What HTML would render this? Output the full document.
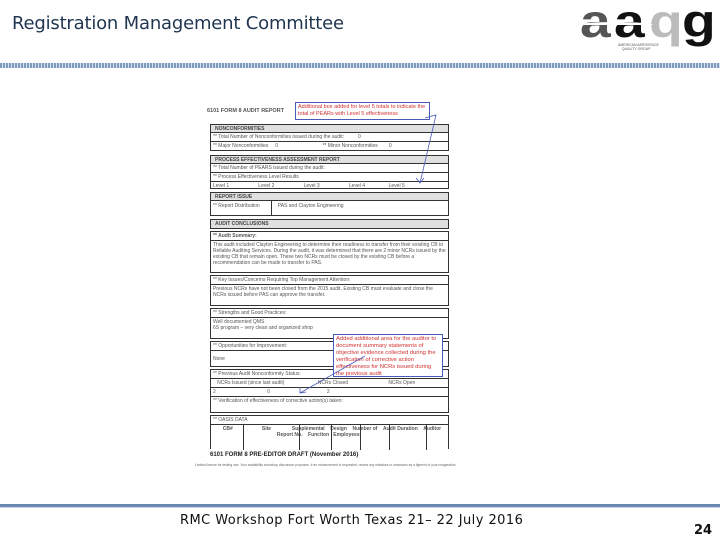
<!DOCTYPE html>
<html><head><meta charset="utf-8"><style>
*{margin:0;padding:0;box-sizing:border-box}
body{width:720px;height:540px;background:#fff;position:relative;overflow:hidden;font-family:"Liberation Sans",sans-serif}
.a{position:absolute}
.t{font-size:5px;color:#555;white-space:nowrap;line-height:6px}
.box{position:absolute;left:210px;width:239px;border:1px solid #333}
.hd{background:#e0e0e0;border-bottom:1px solid #333;height:8px;font-size:5px;font-weight:bold;padding-left:4px;line-height:8px;color:#444}
.logo{position:absolute;font-weight:bold;font-size:46px;line-height:46px;transform:scaleX(1.2);transform-origin:left top}
</style></head><body>
<div class="a" style="left:12px;top:13px;font-size:18px;color:#1f3550;font-family:'DejaVu Sans',sans-serif;letter-spacing:-0.2px">Registration Management Committee</div>
<div class="logo" style="left:580px;top:-2px;color:#555">a</div>
<div class="logo" style="left:614px;top:-2px;color:#111">a</div>
<div class="logo" style="left:649px;top:-2px;color:#bbb">q</div>
<div class="logo" style="left:682px;top:-2px;color:#111">g</div>
<div class="a" style="left:578px;top:22px;width:75px;height:6px;border-top:3px solid #fff;border-radius:50%"></div>
<div class="a t" style="left:618px;top:43px;font-size:3.5px;line-height:4px;color:#555">AMERICAN AEROSPACE<br>&nbsp;&nbsp;&nbsp;&nbsp;QUALITY GROUP</div>
<div class="a" style="left:0;top:63px;width:720px;height:5px;background:repeating-linear-gradient(90deg,#7f9bc0 0 2px,#d8e2ef 2px 3px)"></div>

<div class="a t" style="left:207px;top:108px;font-weight:bold;font-size:5.5px">6101 FORM 8 AUDIT REPORT</div>
<div class="box" style="top:124px;height:27px"><div class="hd">NONCONFORMITIES</div>
<div class="t" style="padding:1px 2px;border-bottom:1px solid #333">** Total Number of Nonconformities issued during the audit: &nbsp;&nbsp;&nbsp;&nbsp;&nbsp;&nbsp;&nbsp;&nbsp;&nbsp;0</div>
<div class="t" style="padding:1px 2px">** Major Nonconformities &nbsp;&nbsp;&nbsp;&nbsp;0 &nbsp;&nbsp;&nbsp;&nbsp;&nbsp;&nbsp;&nbsp;&nbsp;&nbsp;&nbsp;&nbsp;&nbsp;&nbsp;&nbsp;&nbsp;&nbsp;&nbsp;&nbsp;&nbsp;&nbsp;&nbsp;&nbsp;&nbsp;&nbsp;&nbsp;&nbsp;&nbsp;&nbsp;&nbsp;&nbsp;&nbsp;** Minor Nonconformities &nbsp;&nbsp;&nbsp;&nbsp;&nbsp;&nbsp;&nbsp;0</div></div>
<div class="box" style="top:155px;height:34px"><div class="hd">PROCESS EFFECTIVENESS ASSESSMENT REPORT</div>
<div class="t" style="padding:1px 2px;border-bottom:1px solid #333">** Total Number of PEARS issued during the audit:</div>
<div class="t" style="padding:1px 2px;border-bottom:1px solid #333">** Process Effectiveness Level Results</div>
<div class="t" style="padding:1px 2px">Level 1 &nbsp;&nbsp;&nbsp;&nbsp;&nbsp;&nbsp;&nbsp;&nbsp;&nbsp;&nbsp;&nbsp;&nbsp;&nbsp;&nbsp;&nbsp;&nbsp;&nbsp;&nbsp;&nbsp;&nbsp;Level 2 &nbsp;&nbsp;&nbsp;&nbsp;&nbsp;&nbsp;&nbsp;&nbsp;&nbsp;&nbsp;&nbsp;&nbsp;&nbsp;&nbsp;&nbsp;&nbsp;&nbsp;&nbsp;&nbsp;&nbsp;Level 3 &nbsp;&nbsp;&nbsp;&nbsp;&nbsp;&nbsp;&nbsp;&nbsp;&nbsp;&nbsp;&nbsp;&nbsp;&nbsp;&nbsp;&nbsp;&nbsp;&nbsp;&nbsp;&nbsp;&nbsp;Level 4 &nbsp;&nbsp;&nbsp;&nbsp;&nbsp;&nbsp;&nbsp;&nbsp;&nbsp;&nbsp;&nbsp;&nbsp;&nbsp;&nbsp;&nbsp;&nbsp;Level 5</div></div>
<div class="box" style="top:192px;height:24px"><div class="hd">REPORT ISSUE</div>
<div class="t" style="padding:2px 2px">** Report Distribution &nbsp;&nbsp;&nbsp;&nbsp;&nbsp;&nbsp;&nbsp;&nbsp;&nbsp;&nbsp;&nbsp;&nbsp;PAS and Clayton Engineering</div>
<div class="a" style="left:60px;top:8px;width:1px;height:15px;background:#333"></div></div>
<div class="box" style="top:219px;height:10px"><div class="hd" style="border:0">AUDIT CONCLUSIONS</div></div>
<div class="box" style="top:231px;height:42px"><div class="t" style="padding:1px 2px;font-weight:bold;border-bottom:1px solid #333">** Audit Summary:</div>
<div class="t" style="padding:1px 2px;white-space:normal">This audit included Clayton Engineering to determine their readiness to transfer from their existing CB to Reliable Auditing Services. During the audit, it was determined that there are 2 minor NCRs issued by the existing CB that remain open. These two NCRs must be closed by the existing CB before a recommendation can be made to transfer to PAS.</div></div>
<div class="box" style="top:275px;height:31px"><div class="t" style="padding:1px 2px;border-bottom:1px solid #333">** Key Issues/Concerns Requiring Top Management Attention:</div>
<div class="t" style="padding:1px 2px;white-space:normal">Previous NCRs have not been closed from the 2015 audit. Existing CB must evaluate and close the NCRs issued before PAS can approve the transfer.</div></div>
<div class="box" style="top:308px;height:31px"><div class="t" style="padding:1px 2px;border-bottom:1px solid #333">** Strengths and Good Practices:</div>
<div class="t" style="padding:1px 2px">Well documented QMS<br>6S program – very clean and organized shop</div></div>
<div class="box" style="top:341px;height:26px"><div class="t" style="padding:1px 2px;border-bottom:1px solid #333">** Opportunities for Improvement:</div>
<div class="t" style="padding:5px 2px">None</div></div>
<div class="box" style="top:369px;height:44px"><div class="t" style="padding:1px 2px;border-bottom:1px solid #333">** Previous Audit Nonconformity Status:</div>
<div class="t" style="padding:1px 2px;border-bottom:1px solid #333">&nbsp;&nbsp;&nbsp;NCRs Issued (since last audit) &nbsp;&nbsp;&nbsp;&nbsp;&nbsp;&nbsp;&nbsp;&nbsp;&nbsp;&nbsp;&nbsp;&nbsp;&nbsp;&nbsp;&nbsp;&nbsp;&nbsp;&nbsp;&nbsp;&nbsp;&nbsp;&nbsp;&nbsp;NCRs Closed &nbsp;&nbsp;&nbsp;&nbsp;&nbsp;&nbsp;&nbsp;&nbsp;&nbsp;&nbsp;&nbsp;&nbsp;&nbsp;&nbsp;&nbsp;&nbsp;&nbsp;&nbsp;&nbsp;&nbsp;&nbsp;&nbsp;&nbsp;&nbsp;&nbsp;&nbsp;&nbsp;&nbsp;NCRs Open</div>
<div class="t" style="padding:1px 2px;border-bottom:1px solid #333">2 &nbsp;&nbsp;&nbsp;&nbsp;&nbsp;&nbsp;&nbsp;&nbsp;&nbsp;&nbsp;&nbsp;&nbsp;&nbsp;&nbsp;&nbsp;&nbsp;&nbsp;&nbsp;&nbsp;&nbsp;&nbsp;&nbsp;&nbsp;&nbsp;&nbsp;&nbsp;&nbsp;&nbsp;&nbsp;&nbsp;&nbsp;&nbsp;&nbsp;&nbsp;&nbsp;&nbsp;0 &nbsp;&nbsp;&nbsp;&nbsp;&nbsp;&nbsp;&nbsp;&nbsp;&nbsp;&nbsp;&nbsp;&nbsp;&nbsp;&nbsp;&nbsp;&nbsp;&nbsp;&nbsp;&nbsp;&nbsp;&nbsp;&nbsp;&nbsp;&nbsp;&nbsp;&nbsp;&nbsp;&nbsp;&nbsp;&nbsp;&nbsp;&nbsp;&nbsp;&nbsp;&nbsp;&nbsp;&nbsp;&nbsp;&nbsp;&nbsp;2</div>
<div class="t" style="padding:1px 2px">** Verification of effectiveness of corrective action(s) taken:</div></div>
<div class="box" style="top:415px;height:34px;border-bottom:0"><div class="t" style="padding:1px 2px;border-bottom:1px solid #333">** OASIS DATA</div>
<div class="t" style="padding:1px 2px;font-weight:bold">&nbsp;&nbsp;&nbsp;&nbsp;&nbsp;&nbsp;&nbsp;CB# &nbsp;&nbsp;&nbsp;&nbsp;&nbsp;&nbsp;&nbsp;&nbsp;&nbsp;&nbsp;&nbsp;&nbsp;&nbsp;&nbsp;&nbsp;&nbsp;&nbsp;&nbsp;&nbsp;&nbsp;Site &nbsp;&nbsp;&nbsp;&nbsp;&nbsp;&nbsp;&nbsp;&nbsp;&nbsp;&nbsp;&nbsp;&nbsp;&nbsp;&nbsp;Supplemental &nbsp;&nbsp;&nbsp;Design &nbsp;&nbsp;&nbsp;Number of &nbsp;&nbsp;&nbsp;Audit Duration &nbsp;&nbsp;&nbsp;Auditor<br>&nbsp;&nbsp;&nbsp;&nbsp;&nbsp;&nbsp;&nbsp;&nbsp;&nbsp;&nbsp;&nbsp;&nbsp;&nbsp;&nbsp;&nbsp;&nbsp;&nbsp;&nbsp;&nbsp;&nbsp;&nbsp;&nbsp;&nbsp;&nbsp;&nbsp;&nbsp;&nbsp;&nbsp;&nbsp;&nbsp;&nbsp;&nbsp;&nbsp;&nbsp;&nbsp;&nbsp;&nbsp;&nbsp;&nbsp;&nbsp;&nbsp;&nbsp;&nbsp;&nbsp;&nbsp;&nbsp;Report No. &nbsp;&nbsp;&nbsp;Function &nbsp;&nbsp;Employees</div>
<div class="a" style="left:32px;top:8px;width:1px;height:26px;background:#333"></div>
<div class="a" style="left:88px;top:8px;width:1px;height:26px;background:#333"></div>
<div class="a" style="left:120px;top:8px;width:1px;height:26px;background:#333"></div>
<div class="a" style="left:149px;top:8px;width:1px;height:26px;background:#333"></div>
<div class="a" style="left:178px;top:8px;width:1px;height:26px;background:#333"></div>
<div class="a" style="left:215px;top:8px;width:1px;height:26px;background:#333"></div>
</div>
<div class="a t" style="left:210px;top:452px;font-weight:bold;font-size:6px;color:#222">6101 FORM 8 PRE-EDITOR DRAFT (November 2016)</div>
<div class="a t" style="left:195px;top:462px;font-size:3.3px;color:#666">Limited license for testing use. Your availability workshop discussion purposes. If an enhancement is requested, review any mistakes or omissions as a figment of your imagination.</div>

<div class="a" style="left:295px;top:102px;width:135px;height:18px;border:1px solid #4a5ab8;background:#fff;font-size:5.5px;color:#d03030;line-height:7px;padding:1px 2px">Additional box added for level 5 totals to indicate the total of PEARs with Level 5 effectiveness</div>
<div class="a" style="left:333px;top:334px;width:110px;height:43px;border:1px solid #4a5ab8;background:#fff;font-size:5.8px;color:#d03030;line-height:7px;padding:1px 2px">Added additional area for the auditor to document summary statements of objective evidence collected during the verification of corrective action effectiveness for NCRs issued during the previous audit</div>
<svg class="a" style="left:0;top:0" width="720" height="540"><g stroke="#4a5ab8" stroke-width="0.8" fill="none">
<path d="M425 118 L436 115 L420 183 M416 178 L420 183 L424 178"/>
<path d="M365 356 L300 393 M300 387 L300 393 L306 392"/></g></svg>

<div class="a" style="left:0;top:504px;width:720px;height:3px;background:#6a87b0"></div>
<div class="a" style="left:0;top:507px;width:720px;height:1px;background:#c8d6e8"></div>
<div class="a" style="left:180px;top:513px;font-size:13px;color:#111;font-family:'DejaVu Sans',sans-serif;letter-spacing:0.45px">RMC Workshop Fort Worth Texas 21– 22 July 2016</div>
<div class="a" style="left:694px;top:523px;font-size:13px;font-weight:bold;color:#111;font-family:'DejaVu Sans',sans-serif">24</div>
</body></html>
